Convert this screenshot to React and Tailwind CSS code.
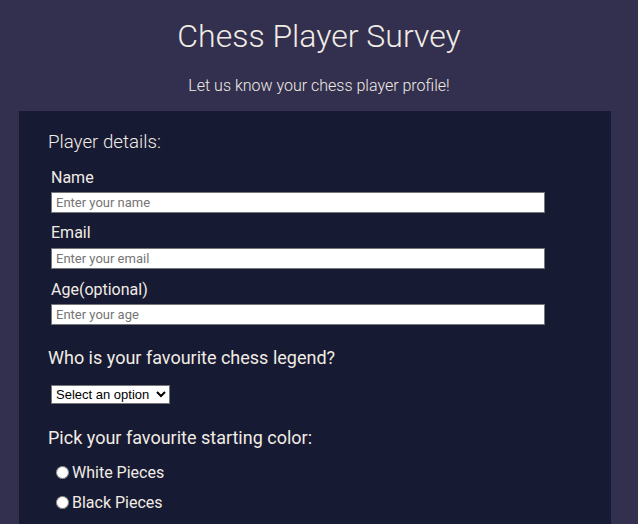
import React from "react";

export default function App() {
  return (
    <div className="min-h-[524px] bg-[#33304f] font-['Roboto',sans-serif] text-[#f1ece4] overflow-hidden">
      <h1 className="pt-[17px] text-center text-[32px] leading-[38px] font-light">Chess Player Survey</h1>
      <p className="mt-[21px] text-center text-[16px] leading-[19px] font-light">Let us know your chess player profile!</p>
      <form className="mt-[16px] ml-[19px] w-[592px] bg-[#171a33] pt-[20px] pb-[20px] flex flex-col">
        <h3 className="ml-[29px] text-[18.72px] leading-[22px] font-light">Player details:</h3>
        <div className="ml-[32px] mt-[15px] flex flex-col">
          <label className="text-[16px] leading-[19px]">Name</label>
          <input
            type="text"
            placeholder="Enter your name"
            className="mt-[5px] w-[494px] h-[21px] bg-white border border-[#767676] px-[4px] text-[13px] text-black font-['Roboto',sans-serif] placeholder:text-[#757575] outline-none"
          />
          <label className="mt-[10px] text-[16px] leading-[19px]">Email</label>
          <input
            type="email"
            placeholder="Enter your email"
            className="mt-[6px] w-[494px] h-[21px] bg-white border border-[#767676] px-[4px] text-[13px] text-black font-['Roboto',sans-serif] placeholder:text-[#757575] outline-none"
          />
          <label className="mt-[11px] text-[16px] leading-[19px]">Age(optional)</label>
          <input
            type="number"
            placeholder="Enter your age"
            className="mt-[5px] w-[494px] h-[21px] bg-white border border-[#767676] px-[4px] text-[13px] text-black font-['Roboto',sans-serif] placeholder:text-[#757575] outline-none"
          />
        </div>
        <h3 className="ml-[29px] mt-[22px] text-[18px] leading-[21px]">Who is your favourite chess legend?</h3>
        <div className="ml-[32px] mt-[14px]">
          <select className="w-[119px] h-[19px] bg-white text-black border border-[#767676] text-[13px] font-['Liberation_Sans',Arial,sans-serif]">
            <option>Select an option</option>
            <option>Magnus Carlsen</option>
            <option>Garry Kasparov</option>
          </select>
        </div>
        <h3 className="ml-[29px] mt-[21px] text-[18px] leading-[21px]">Pick your favourite starting color:</h3>
        <div className="ml-[32px] mt-[15px] flex flex-col gap-[11px]">
          <label className="flex items-center text-[16px] leading-[19px]">
            <input type="radio" name="color" className="m-0 ml-[5px] mr-[3px] w-[13px] h-[13px]" />
            White Pieces
          </label>
          <label className="flex items-center text-[16px] leading-[19px]">
            <input type="radio" name="color" className="m-0 ml-[5px] mr-[3px] w-[13px] h-[13px]" />
            Black Pieces
          </label>
        </div>
      </form>
    </div>
  );
}
